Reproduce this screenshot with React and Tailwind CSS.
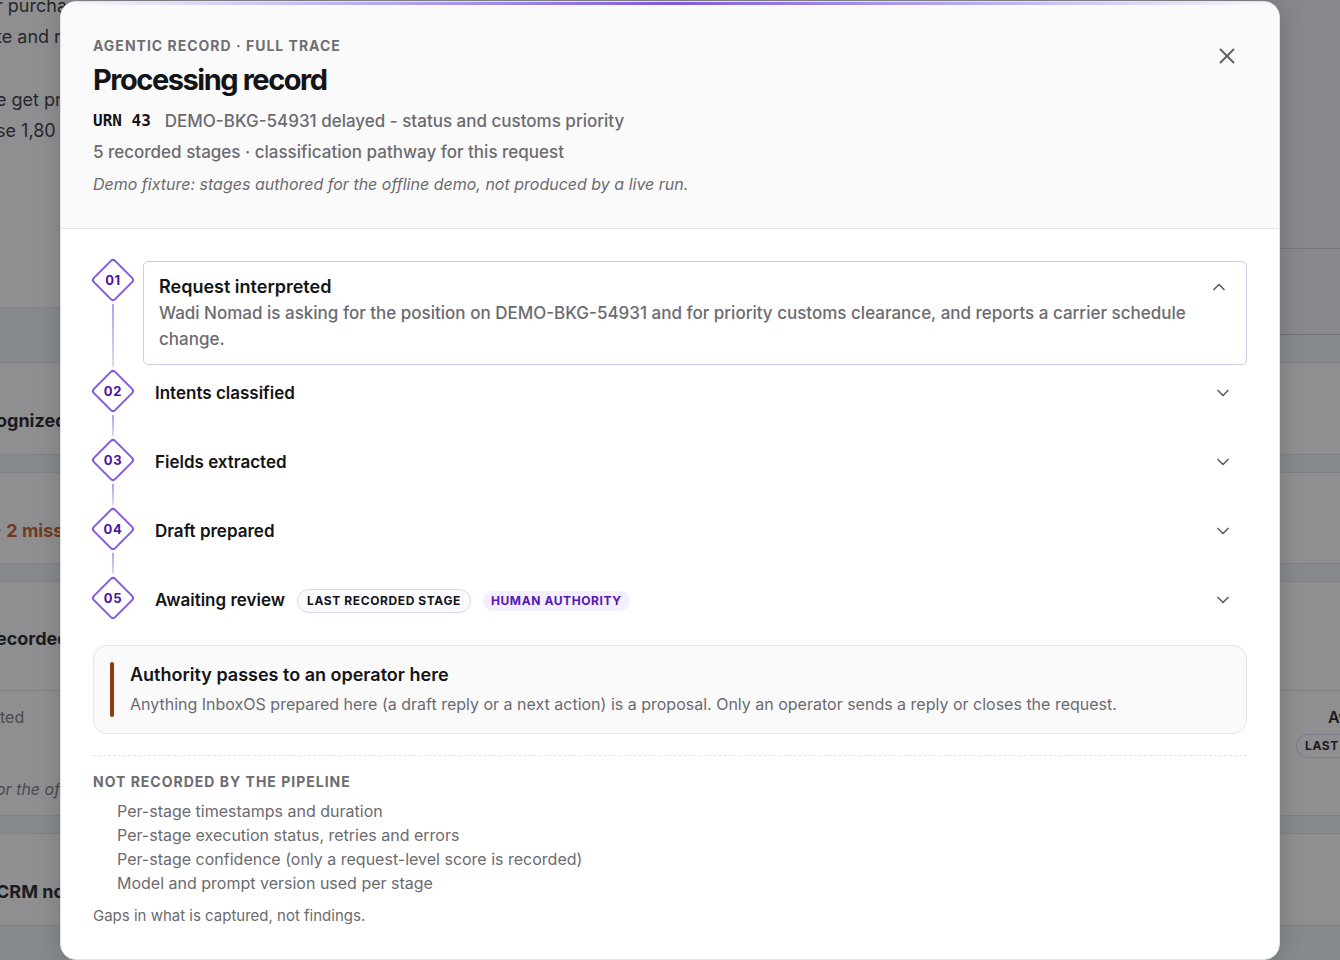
import { ChevronDown, ChevronUp, X } from "lucide-react";

const stages = [
  {
    no: "01",
    title: "Request interpreted",
    detail:
      "Wadi Nomad is asking for the position on DEMO-BKG-54931 and for priority customs clearance, and reports a carrier schedule change.",
  },
  { no: "02", title: "Intents classified" },
  { no: "03", title: "Fields extracted" },
  { no: "04", title: "Draft prepared" },
  { no: "05", title: "Awaiting review", last: true },
];

const gaps = [
  "Per-stage timestamps and duration",
  "Per-stage execution status, retries and errors",
  "Per-stage confidence (only a request-level score is recorded)",
  "Model and prompt version used per stage",
];

function Diamond({ no }) {
  return (
    <div className="grid size-[42px] shrink-0 place-items-center">
      <div className="col-start-1 row-start-1 size-8 rotate-45 rounded-[4px] border-2 border-[#8259e0] bg-white" />
      <span className="z-10 col-start-1 row-start-1 text-[13px] leading-none font-bold tracking-wider text-[#4c12a1]">
        {no}
      </span>
    </div>
  );
}

function Stage({ stage }) {
  return (
    <li className="flex gap-[9px]">
      <div className="-ml-px flex w-[42px] shrink-0 flex-col items-center">
        <Diamond no={stage.no} />
        {!stage.last && (
          <div className="my-[3px] w-[2px] flex-1 bg-linear-to-b from-[#b89ee8] to-[#e0dcf0]" />
        )}
      </div>
      {stage.detail ? (
        <div className="mt-[2px] mb-[5px] min-w-0 flex-1 rounded-[5px] border border-[#cfcaea] pt-3 pr-[17px] pb-3 pl-[15px]">
          <button
            type="button"
            aria-expanded="true"
            className="flex w-full items-center justify-between text-left"
          >
            <span className="text-[18px] leading-[26px] font-semibold">{stage.title}</span>
            <ChevronUp size={20} className="text-[#5f5f63]" />
          </button>
          <p className="pr-6 text-[17px] leading-[26px] font-medium text-[#6b6b70]">
            {stage.detail}
          </p>
        </div>
      ) : (
        <div className={stage.last ? "min-w-0 flex-1" : "min-w-0 flex-1 pb-[23px]"}>
          <button
            type="button"
            aria-expanded="false"
            className="flex h-[46px] w-full items-center pr-[14px] pl-3 text-left"
          >
            <span className="text-[17px] leading-[26px] font-semibold">{stage.title}</span>
            {stage.last && (
              <span className="mt-[2px] ml-3 flex items-center gap-3 text-[12px] leading-4 font-bold tracking-wider">
                <span className="rounded-full border border-[#ddd6f5] bg-[#fbfaff] px-[9px] py-[3px]">
                  LAST RECORDED STAGE
                </span>
                <span className="rounded-full bg-[#f3effd] px-2 py-[2px] text-[#5419b4]">
                  HUMAN AUTHORITY
                </span>
              </span>
            )}
            <ChevronDown size={20} className="ml-auto text-[#5f5f63]" />
          </button>
        </div>
      )}
    </li>
  );
}

function Backdrop() {
  return (
    <div
      aria-hidden="true"
      className="absolute inset-0 flex justify-between overflow-hidden bg-[#868a8d] whitespace-nowrap text-[#27272b]"
    >
      <div className="-ml-1 w-[84px] overflow-hidden">
        <div className="flex h-[308px] flex-col border-b border-[#808488] bg-[#8f8f91] text-[18px] leading-[31px]">
          <p className="-mt-[10px]">r purcha</p>
          <p>te and r</p>
          <p className="mt-8">e get pr</p>
          <p>se 1,80</p>
        </div>
        <div className="mt-[54px] flex h-[93px] items-center border-y border-[#808386] bg-[#8f8f91] pt-6 text-[18px] font-bold text-[#1b1b1e]">
          ognized
        </div>
        <div className="mt-[17px] flex h-[92px] items-center border-y border-[#808386] bg-[#8f8f91] pt-6 text-[18px] font-bold text-[#713b1e]">
          · 2 miss
        </div>
        <div className="mt-[17px] h-[235px] border-y border-[#808386] bg-[#8f8f91]">
          <div className="h-[109px] border-b border-[#7f7f84] pt-[43px] text-[18px] font-bold text-[#1b1b1e]">
            ecorded
          </div>
          <p className="pt-[14px] pl-1 text-[16px] text-[#4a4a4e]">ted</p>
          <p className="mt-12 text-[16px] text-[#4a4a4e] italic">or the of</p>
        </div>
        <div className="mt-[17px] flex h-[93px] items-center border-y border-[#808386] bg-[#8f8f91] pt-6 text-[18px] font-bold text-[#1b1b1e]">
          CRM not
        </div>
      </div>
      <div className="w-[70px] overflow-hidden">
        <div className="h-[249px] border-b border-[#77777b] bg-[#88878b]" />
        <div className="h-[86px] border-b border-[#737378] bg-[#88878b]" />
        <div className="mt-[27px] h-[93px] border-y border-[#7f8284] bg-[#8f8f91]" />
        <div className="mt-[17px] h-[92px] border-y border-[#7f8284] bg-[#8f8f91]" />
        <div className="mt-[17px] h-[235px] border-y border-[#7f8284] bg-[#8f8f91]">
          <div className="h-[109px] border-b border-[#7f7f84]" />
          <p className="pt-[14px] pl-[58px] text-[16px] font-semibold text-[#1b1b1e]">Aw</p>
          <span className="mt-[5px] ml-[26px] inline-block rounded-l-full border border-r-0 border-[#7e7c8d] py-[3px] pr-5 pl-2 text-[12px] leading-4 font-bold tracking-wider text-[#1b1b1e]">
            LAST
          </span>
        </div>
        <div className="mt-[17px] h-[93px] border-y border-[#7f8284] bg-[#8f8f91]" />
      </div>
    </div>
  );
}

export default function App() {
  return (
    <div className="relative min-h-screen overflow-hidden font-['Inter',sans-serif] text-[#141416]">
      <Backdrop />
      <div className="relative flex min-h-screen px-[60px] pt-px">
        <section
          role="dialog"
          aria-modal="true"
          aria-labelledby="record-title"
          className="flex-1 overflow-hidden rounded-[16px] border border-[#e2e2e6] bg-white shadow-[0_0_24px_rgba(0,0,0,0.18)]"
        >
          <div className="h-[3px] bg-linear-to-r from-[#fafafb] via-[#8258dc] to-[#fafafb]" />
          <header className="flex items-start justify-between border-b border-[#e4e4e7] bg-[#fafafb] px-8 pt-[29px] pb-[31px]">
            <div>
              <p className="text-[14px] leading-6 font-bold tracking-[1px] text-[#6f6f74]">
                AGENTIC RECORD · FULL TRACE
              </p>
              <h1
                id="record-title"
                className="text-[29px] leading-[44px] font-bold tracking-tighter"
              >
                Processing record
              </h1>
              <p className="flex items-center gap-[14px] pt-[6px] text-[17px] leading-[26px] font-medium text-[#6b6b70]">
                <span className="font-['DejaVu_Sans_Mono',monospace] text-[16px] font-bold text-[#141416]">
                  URN 43
                </span>
                DEMO-BKG-54931 delayed - status and customs priority
              </p>
              <p className="pt-[5px] text-[17px] leading-[26px] font-medium text-[#6b6b70]">
                5 recorded stages · classification pathway for this request
              </p>
              <p className="pt-[6px] text-[16px] leading-[26px] text-[#6b6b70] italic">
                Demo fixture: stages authored for the offline demo, not produced by a live run.
              </p>
            </div>
            <button
              type="button"
              aria-label="Close"
              className="mt-[2px] grid size-10 place-items-center text-[#5f5f63]"
            >
              <X size={26} strokeWidth={1.75} />
            </button>
          </header>

          <div className="px-8 pt-[30px] pb-[30px]">
            <ol>
              {stages.map((s) => (
                <Stage key={s.no} stage={s} />
              ))}
            </ol>

            <div className="mt-[22px] flex gap-4 rounded-[14px] border border-[#e6e6e9] bg-[#fafafb] p-4">
              <div className="w-1 shrink-0 rounded-full bg-[#8f3b12]" />
              <div>
                <h2 className="text-[18px] leading-[26px] font-semibold">
                  Authority passes to an operator here
                </h2>
                <p className="pt-[3px] text-[16px] leading-[26px] text-[#6b6b70]">
                  Anything InboxOS prepared here (a draft reply or a next action) is a proposal. Only
                  an operator sends a reply or closes the request.
                </p>
              </div>
            </div>

            <div className="mt-[21px] border-t border-dashed border-[#e6e6e9] pt-[14px] text-[#6b6b70]">
              <h3 className="text-[14px] leading-6 font-bold tracking-[1px]">
                NOT RECORDED BY THE PIPELINE
              </h3>
              <ul className="pt-[5px] pl-6 text-[16px] leading-6">
                {gaps.map((g) => (
                  <li key={g}>{g}</li>
                ))}
              </ul>
              <p className="pt-[9px] text-[15px] leading-6">Gaps in what is captured, not findings.</p>
            </div>
          </div>
        </section>
      </div>
    </div>
  );
}
